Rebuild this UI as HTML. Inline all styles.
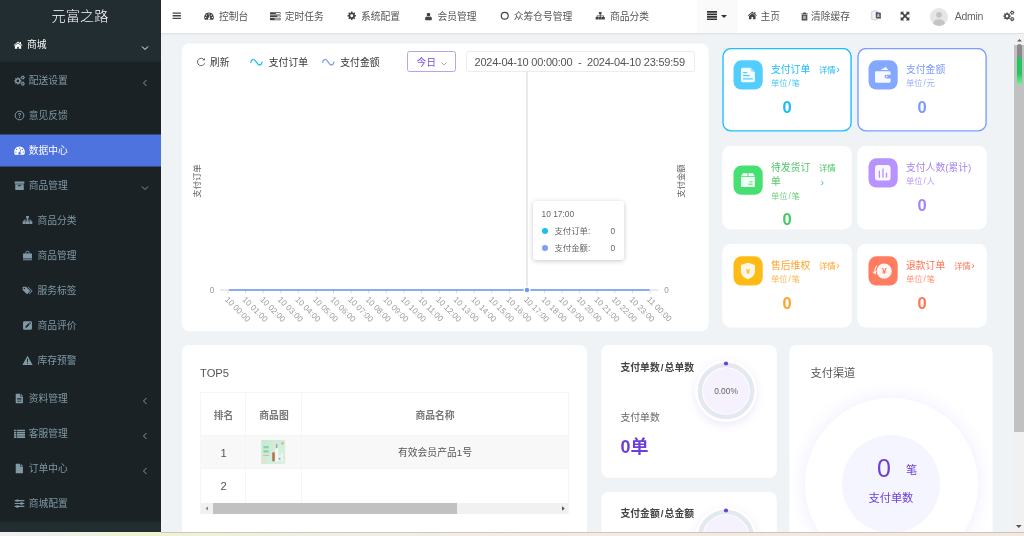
<!DOCTYPE html>
<html lang="zh-CN">
<head>
<meta charset="utf-8">
<title>元富之路</title>
<style>
*{box-sizing:border-box;margin:0;padding:0}
html,body{width:1024px;height:536px;overflow:hidden;background:#f0f3f6;font-family:"Liberation Sans","Noto Sans CJK SC",sans-serif;color:#444}
.abs{position:absolute}
#root{position:absolute;left:0;top:0;width:1024px;height:536px;overflow:hidden;will-change:transform;background:#f0f3f6}
#side{position:absolute;left:0;top:0;width:161px;height:532px;background:#1a2226;overflow:hidden}
#logo{position:absolute;left:0;top:0;width:161px;height:33px;text-indent:-1px;color:#fff;font-size:14.200px;line-height:32px;text-align:center;font-weight:300}
.mi{position:absolute;left:0;width:161px;height:35px;line-height:35.500px;font-size:9.750px;color:#7e98a4;white-space:nowrap}
.mi .t{position:absolute;left:28.700px;top:0}
.mi.sub .t{left:37.5px}
.mi svg.ic{position:absolute;left:14px;top:12px;width:11px;height:11px;fill:#8199a5;color:#8199a5}
.mi.sub svg.ic{left:22px}
.mi svg.ar{position:absolute;left:141px;top:16px;width:8px;height:8px;fill:none;stroke:#7e98a4;stroke-width:1}
.mi.top{color:#fff;height:29px;line-height:24px}
.mi.top .t{left:27px}
.mi.top svg.ic{left:12.500px;width:10px;height:10px}
.mi.top svg.ic{fill:#fff;top:7px}
.mi.top svg.ar{stroke:#fff;top:11px}
.mi.act{color:#fff;height:32px;line-height:33.500px}
.mi.act svg.ic{fill:#fff;top:11px}
#sidefoot{position:absolute;left:0;top:522px;width:161px;height:12px;background:#222d32}
#nav{position:absolute;left:161px;top:0;width:863px;height:33px;background:#fff;box-shadow:0 1px 2px rgba(0,0,0,.09)}
.ni{position:absolute;top:0;height:33px;line-height:33.500px;font-size:9.750px;color:#555;white-space:nowrap}
.ni svg{position:absolute;top:11px;fill:#444}
.card{position:absolute}
.xl{font-size:8.150px;fill:#9c9c9c;font-family:"Liberation Sans","Noto Sans CJK SC",sans-serif}
#vscroll{position:absolute;left:1013.500px;top:33.500px;width:11px;height:499px;background:#f1f1f1}
#thumb{position:absolute;left:0;top:11.500px;width:11px;height:386.500px;background:#c1c1c1}
#green{position:absolute;left:3px;top:10.500px;width:5.500px;height:41px;border-radius:3px;background:linear-gradient(#8a8a8a 0,#8a8a8a 31%,#22c55e 35%,#22c55e 72%,#7bef97 100%)}
#strip{position:absolute;left:0;top:531.700px;width:1024px;height:5px;background:linear-gradient(90deg,#eeeff1 0,#eef0e6 6%,#eef3cf 14%,#eff2d4 20%,#f0efe2 32%,#f3ede2 45%,#f5ebe1 60%,#f4e7dc 100%)}
#strip:before{content:"";position:absolute;left:161px;top:0;width:863px;height:1px;background:#cac7c0}
.yn{font-size:8.400px;fill:#666;font-family:"Liberation Sans","Noto Sans CJK SC",sans-serif}
.hd{position:absolute;font-size:9.800px;line-height:22px;white-space:nowrap}
.tt{font-size:8.400px;line-height:12px;color:#666;white-space:nowrap}
.sc{position:absolute;width:130px;height:84px;border:1px solid transparent}
.sc .ib{position:absolute;left:10px}
.sc .tl{position:absolute;left:48px;font-size:9.800px;line-height:14px;white-space:nowrap}
.sc .un{position:absolute;left:48px;font-size:8.400px;line-height:12px;white-space:nowrap;opacity:.8}
.sc .dt{position:absolute;left:96px;font-size:8.400px;line-height:14px;white-space:nowrap}
.sc .nm{position:absolute;left:0;width:128px;text-align:center;font-size:16.500px;font-weight:bold;line-height:20px}
.th{position:absolute;text-align:center;font-size:9.800px;line-height:20px;color:#787878;font-weight:bold;white-space:nowrap}
.td{position:absolute;text-align:center;font-size:9.800px;line-height:20px;color:#555;white-space:nowrap}
.td.n{font-size:11.200px}
.bt{font-size:9.800px;font-weight:bold;line-height:20px;color:#444;white-space:nowrap}
.ring{position:absolute;width:62px;height:62px;border-radius:50%;background:#fff;box-shadow:0 3px 10px rgba(130,100,220,.14)}
.ring svg{position:absolute;left:0;top:0}
.ring .in{position:absolute;left:0;top:0;width:62px;text-align:center;font-size:8.400px;line-height:63px;color:#666}

</style>
</head>
<body>
<div id="root">
<div id="side">
<svg class="abs" style="left:0;top:0" width="161" height="536" viewBox="0 0 161 536"><rect x="0" y="0" width="161" height="61.600" fill="#222d32"/><rect x="0" y="134.500" width="161" height="32" fill="#4e73df"/><rect x="0" y="521.700" width="161" height="11" fill="#222d32"/></svg>
<div id="logo">元富之路</div>
<div class="mi top" style="top:33px"><svg class="ic" viewBox="0 0 16 16"><path d="M8 2.2L1 8.2l.9 1L8 4l6.100 5.2.9-1L12.8 6.300V3h-1.600v1.900Z"/><path d="M8 5.100L3 9.300V14h3.800v-3.300h2.400V14H13V9.300Z"/></svg><span class="t">商城</span><svg class="ar" viewBox="0 0 8 8"><path d="M1 2.500L4 5.500L7 2.500"/></svg></div>
<div class="mi " style="top:62.5px"><svg class="ic" viewBox="0 0 16 16"><path fill-rule="evenodd" d="M10.72 7.71L10.72 9.49L9.49 9.53L9.01 10.69L9.85 11.59L8.59 12.85L7.69 12.01L6.53 12.49L6.49 13.72L4.71 13.72L4.67 12.49L3.51 12.01L2.61 12.85L1.35 11.59L2.19 10.69L1.71 9.53L0.48 9.49L0.48 7.71L1.71 7.67L2.19 6.51L1.35 5.61L2.61 4.35L3.51 5.19L4.67 4.71L4.71 3.48L6.49 3.48L6.53 4.71L7.69 5.19L8.59 4.35L9.85 5.61L9.01 6.51L9.49 7.67ZM3.70 8.60a1.9 1.9 0 1 0 3.8 0a1.9 1.9 0 1 0 -3.8 0Z"/><path fill-rule="evenodd" d="M15.82 2.89L15.82 4.31L14.99 4.31L14.51 5.14L14.92 5.86L13.70 6.57L13.28 5.85L12.32 5.85L11.90 6.57L10.68 5.86L11.09 5.14L10.61 4.31L9.78 4.31L9.78 2.89L10.61 2.89L11.09 2.06L10.68 1.34L11.90 0.63L12.32 1.35L13.28 1.35L13.70 0.63L14.92 1.34L14.51 2.06L14.99 2.89ZM11.70 3.60a1.1 1.1 0 1 0 2.2 0a1.1 1.1 0 1 0 -2.2 0Z"/><path fill-rule="evenodd" d="M15.82 11.89L15.82 13.31L14.99 13.31L14.51 14.14L14.92 14.86L13.70 15.57L13.28 14.85L12.32 14.85L11.90 15.57L10.68 14.86L11.09 14.14L10.61 13.31L9.78 13.31L9.78 11.89L10.61 11.89L11.09 11.06L10.68 10.34L11.90 9.63L12.32 10.35L13.28 10.35L13.70 9.63L14.92 10.34L14.51 11.06L14.99 11.89ZM11.70 12.60a1.1 1.1 0 1 0 2.2 0a1.1 1.1 0 1 0 -2.2 0Z"/></svg><span class="t">配送设置</span><svg class="ar" viewBox="0 0 8 8"><path d="M5.500 1L2.500 4L5.500 7"/></svg></div>
<div class="mi " style="top:97.5px"><svg class="ic" viewBox="0 0 16 16"><circle cx="8" cy="8" r="6.300" fill="none" stroke="currentColor" stroke-width="1.400"/><path d="M5.900 6.500c0-1.300 1-2.100 2.200-2.100s2.100.8 2.100 1.900c0 1.500-1.600 1.600-1.600 3H7.400c0-1.800 1.500-2 1.500-3 0-.5-.4-.8-.9-.8s-.9.400-.9 1ZM7.300 10.200h1.400v1.400H7.300Z"/></svg><span class="t">意见反馈</span></div>
<div class="mi act" style="top:134px"><svg class="ic" viewBox="0 0 16 16"><path fill-rule="evenodd" d="M8 2.300a7.800 7.800 0 0 0-6.700 11.700h13.400A7.800 7.800 0 0 0 8 2.300ZM8 3.600a1 1 0 1 1 0 2a1 1 0 0 1 0-2ZM3.900 5.400a1 1 0 1 1 0 2a1 1 0 0 1 0-2ZM12.100 5.400a1 1 0 1 1 0 2a1 1 0 0 1 0-2ZM2.700 9.300a1 1 0 1 1 0 2a1 1 0 0 1 0-2ZM13.300 9.300a1 1 0 1 1 0 2a1 1 0 0 1 0-2ZM9.300 6.200l.9.300-1.100 4.100a1.700 1.700 0 1 1-1-.3Z"/></svg><span class="t">数据中心</span></div>
<div class="mi " style="top:167.5px"><svg class="ic" viewBox="0 0 16 16"><path fill-rule="evenodd" d="M1 2h14v3.400H1ZM1.800 6.200h12.400V14.500H1.800ZM6 7.800a.7.700 0 0 0 0 1.400h4a.7.700 0 0 0 0-1.400Z"/></svg><span class="t">商品管理</span><svg class="ar" viewBox="0 0 8 8"><path d="M1 2.500L4 5.500L7 2.500"/></svg></div>
<div class="mi sub" style="top:202.5px"><svg class="ic" viewBox="0 0 16 16"><path d="M6 1.500h4v3.600H8.600v1.700h4.800v2.300H15v3.900h-4.400V9.100h1.600V8H8.600v1.100h1.600v3.900H5.800V9.100h1.600V8H3.800v1.100h1.600v3.900H1V9.100h1.600V6.800h4.800V5.100H6Z"/></svg><span class="t">商品分类</span></div>
<div class="mi sub" style="top:237.5px"><svg class="ic" viewBox="0 0 16 16"><path fill-rule="evenodd" d="M5 5V4a3 3 0 0 1 6 0v1h3.500v7.500h-13V5ZM6.200 5h3.600V4a1.800 1.800 0 0 0-3.600 0ZM1.500 13.300h13V15h-13Z"/></svg><span class="t">商品管理</span></div>
<div class="mi sub" style="top:272.5px"><svg class="ic" viewBox="0 0 16 16"><path fill-rule="evenodd" d="M1 2.500h4.700l6.300 6.300-4.700 4.700L1 7.200ZM3.500 3.900a1.100 1.100 0 1 0 0 2.200a1.100 1.100 0 0 0 0-2.200Z"/><path d="M7.600 2.500H9l6.300 6.300-4.700 4.700-.8-.8 3.900-3.900Z"/></svg><span class="t">服务标签</span></div>
<div class="mi sub" style="top:307.5px"><svg class="ic" viewBox="0 0 16 16"><path fill-rule="evenodd" d="M3.500 1.800h9a2 2 0 0 1 2 2v8.400a2 2 0 0 1-2 2h-9a2 2 0 0 1-2-2V3.800a2 2 0 0 1 2-2ZM10.300 4.200l1.600 1.600 1-1-1.600-1.600ZM9.600 4.900L5 9.500v1.600h1.600l4.600-4.600Z"/></svg><span class="t">商品评价</span></div>
<div class="mi sub" style="top:342.5px"><svg class="ic" viewBox="0 0 16 16"><path fill-rule="evenodd" d="M8 1.200L15.500 14.500H.5ZM7.200 5.500l.2 4.700h1.200l.2-4.700ZM7.200 11.200h1.600v1.600H7.200Z"/></svg><span class="t">库存预警</span></div>
<div class="mi " style="top:380.5px"><svg class="ic" viewBox="0 0 16 16"><path fill-rule="evenodd" d="M2.500 1h6.300v4.200h4.200V15H2.500ZM9.800 1l3.200 3.200H9.800ZM4.600 7.300v1h6.300v-1ZM4.600 9.400v1h6.300v-1ZM4.600 11.500v1h6.300v-1Z"/></svg><span class="t">资料管理</span><svg class="ar" viewBox="0 0 8 8"><path d="M5.500 1L2.500 4L5.500 7"/></svg></div>
<div class="mi " style="top:415.5px"><svg class="ic" viewBox="0 0 16 16"><path d="M0 2.500h3v2.400H0ZM4 2.500h12v2.400H4ZM0 5.700h3v2.400H0ZM4 5.700h12v2.400H4ZM0 8.900h3v2.400H0ZM4 8.900h12v2.400H4ZM0 12.100h3v2.400H0ZM4 12.100h12v2.400H4Z"/></svg><span class="t">客服管理</span><svg class="ar" viewBox="0 0 8 8"><path d="M5.500 1L2.500 4L5.500 7"/></svg></div>
<div class="mi " style="top:450.5px"><svg class="ic" viewBox="0 0 16 16"><path d="M2.500 1h6.300v4.200h4.200V15H2.500ZM9.800 1l3.200 3.200H9.800Z"/></svg><span class="t">订单中心</span><svg class="ar" viewBox="0 0 8 8"><path d="M5.500 1L2.500 4L5.500 7"/></svg></div>
<div class="mi " style="top:485.5px"><svg class="ic" viewBox="0 0 16 16"><path d="M1 3h2.500V2h3v1H15v1.600H6.500v1h-3v-1H1ZM1 7.200h8.500v-1h3v1H15v1.600h-2.500v1h-3v-1H1ZM1 11.400h2.500v-1h3v1H15V13H6.500v1h-3v-1H1Z"/></svg><span class="t">商城配置</span></div>
</div>
<div id="nav">
<div class="abs" style="left:535.7px;top:0;width:41px;height:33px;background:#fafafa"></div>
<svg class="abs" style="left:545.7px;top:10.700px;fill:#333" width="10" height="9.300" viewBox="0 0 11 10" preserveAspectRatio="none"><path d="M0 0h11v1.800H0ZM0 2.700h11v1.800H0ZM0 5.400h11v1.800H0ZM0 8.100h11v1.800H0Z"/></svg>
<svg class="abs" style="left:560.0px;top:14.5px;fill:#333" width="6" height="3" viewBox="0 0 6 3"><path d="M0 0h6L3 3Z"/></svg>
<div class="ni" style="left:0"><svg style="left:11.0px;top:11.4px;color:#444" width="9.5" height="9.5" viewBox="0 0 16 16"><path d="M1 2.600h14v2.200H1ZM1 6.900h14v2.200H1ZM1 11.200h14v2.200H1Z"/></svg></div>
<div class="ni" style="left:0"><svg style="left:43.0px;top:11.2px;color:#444" width="10" height="10" viewBox="0 0 16 16"><path fill-rule="evenodd" d="M8 2.300a7.800 7.800 0 0 0-6.700 11.700h13.400A7.800 7.800 0 0 0 8 2.300ZM8 3.600a1 1 0 1 1 0 2a1 1 0 0 1 0-2ZM3.900 5.400a1 1 0 1 1 0 2a1 1 0 0 1 0-2ZM12.100 5.400a1 1 0 1 1 0 2a1 1 0 0 1 0-2ZM2.700 9.300a1 1 0 1 1 0 2a1 1 0 0 1 0-2ZM13.300 9.300a1 1 0 1 1 0 2a1 1 0 0 1 0-2ZM9.300 6.200l.9.300-1.100 4.100a1.700 1.700 0 1 1-1-.3Z"/></svg><span class="abs" style="left:57.9px">控制台</span></div>
<div class="ni" style="left:0"><svg style="left:109.4px;top:10.9px;color:#444" width="10.5" height="10.5" viewBox="0 0 16 16"><path fill-rule="evenodd" d="M0 2h16v3.400H0ZM9 3v1.400h6V3ZM0 6.300h16v3.400H0ZM11 7.300v1.400h4V7.300ZM0 10.600h16V14H0ZM7 11.600V13h8v-1.400Z"/></svg><span class="abs" style="left:123.8px">定时任务</span></div>
<div class="ni" style="left:0"><svg style="left:186.2px;top:11.4px;color:#444" width="9.5" height="9.5" viewBox="0 0 16 16"><path fill-rule="evenodd" d="M15.09 6.76L15.09 9.24L13.45 9.31L12.77 10.93L13.89 12.14L12.14 13.89L10.93 12.77L9.31 13.45L9.24 15.09L6.76 15.09L6.69 13.45L5.07 12.77L3.86 13.89L2.11 12.14L3.23 10.93L2.55 9.31L0.91 9.24L0.91 6.76L2.55 6.69L3.23 5.07L2.11 3.86L3.86 2.11L5.07 3.23L6.69 2.55L6.76 0.91L9.24 0.91L9.31 2.55L10.93 3.23L12.14 2.11L13.89 3.86L12.77 5.07L13.45 6.69ZM5.50 8.00a2.5 2.5 0 1 0 5.0 0a2.5 2.5 0 1 0 -5.0 0Z"/></svg><span class="abs" style="left:200.0px">系统配置</span></div>
<div class="ni" style="left:0"><svg style="left:263.0px;top:11.7px;color:#444" width="9" height="9" viewBox="0 0 16 16"><path d="M8 1.500a3.300 3.300 0 0 1 0 6.600a3.300 3.300 0 0 1 0-6.600ZM4.500 8c1 .8 2.200 1.100 3.500 1.100S10.500 8.800 11.500 8c1.700.3 2.500 2.200 2.500 4.300 0 1.300-.8 2.200-2 2.200H4c-1.200 0-2-.9-2-2.200C2 10.200 2.800 8.300 4.500 8Z"/></svg><span class="abs" style="left:276.6px">会员管理</span></div>
<div class="ni" style="left:0"><svg style="left:338.5px;top:11.4px;color:#444" width="9.5" height="9.5" viewBox="0 0 16 16"><circle cx="8" cy="8" r="5.800" fill="none" stroke="currentColor" stroke-width="2"/></svg><span class="abs" style="left:352.7px">众筹仓号管理</span></div>
<div class="ni" style="left:0"><svg style="left:434.3px;top:10.9px;color:#444" width="10.5" height="10.5" viewBox="0 0 16 16"><path d="M6 1.500h4v3.600H8.600v1.700h4.800v2.300H15v3.900h-4.400V9.100h1.600V8H8.600v1.100h1.600v3.900H5.800V9.100h1.600V8H3.800v1.100h1.600v3.900H1V9.100h1.600V6.800h4.800V5.100H6Z"/></svg><span class="abs" style="left:448.9px">商品分类</span></div>
<div class="ni" style="left:0"><svg style="left:586.4px;top:10.3px;color:#444" width="10.5" height="10.5" viewBox="0 0 16 16"><path d="M8 2.2L1 8.2l.9 1L8 4l6.100 5.2.9-1L12.8 6.300V3h-1.600v1.900Z"/><path d="M8 5.100L3 9.300V14h3.800v-3.300h2.400V14H13V9.300Z"/></svg><span class="abs" style="left:599.5px">主页</span></div>
<div class="ni" style="left:0"><svg style="left:639.2px;top:11.7px;color:#444" width="9" height="9" viewBox="0 0 16 16"><path fill-rule="evenodd" d="M6 1h4l.8 1.500H14V4H2V2.500h3.200ZM3 5h10v9a1 1 0 0 1-1 1H4a1 1 0 0 1-1-1ZM5.200 6.500v6.500h1V6.500ZM7.500 6.500v6.500h1V6.500ZM9.800 6.500v6.500h1V6.500Z"/></svg><span class="abs" style="left:650.0px">清除缓存</span></div>
<div class="ni" style="left:0"><svg style="left:709.8px;top:10.3px;color:#444" width="10.5" height="10.5" viewBox="0 0 16 16"><path d="M1 2.500L7.500 1l3 1.800v11L7 15.500 1 14Z" fill="#f3f3f3" stroke="#b8b8b8" stroke-width=".9"/><path d="M7.300 3.200L15 4.300v8.900L7.300 12.500Z" fill="#4d5566"/><path d="M9.500 10.800l1.600-5 1.600 5M10 9.300h2.200" fill="none" stroke="#fff" stroke-width=".9"/></svg></div>
<div class="ni" style="left:0"><svg style="left:738.8px;top:10.6px;color:#444" width="10" height="10" viewBox="0 0 16 16"><path d="M1 1h5.800L4.900 2.900l3.100 3.100 3.100-3.100L9.200 1H15v5.800l-1.900-1.900L10 8l3.100 3.100 1.900-1.900V15H9.200l1.900-1.900L8 10l-3.100 3.100L6.800 15H1V9.200l1.900 1.900L6 8 2.900 4.900 1 6.800Z"/></svg></div>
<div class="ni" style="left:0"><svg style="left:842.0px;top:10.4px;color:#444" width="11.5" height="11.5" viewBox="0 0 16 16"><path fill-rule="evenodd" d="M10.72 7.71L10.72 9.49L9.49 9.53L9.01 10.69L9.85 11.59L8.59 12.85L7.69 12.01L6.53 12.49L6.49 13.72L4.71 13.72L4.67 12.49L3.51 12.01L2.61 12.85L1.35 11.59L2.19 10.69L1.71 9.53L0.48 9.49L0.48 7.71L1.71 7.67L2.19 6.51L1.35 5.61L2.61 4.35L3.51 5.19L4.67 4.71L4.71 3.48L6.49 3.48L6.53 4.71L7.69 5.19L8.59 4.35L9.85 5.61L9.01 6.51L9.49 7.67ZM3.70 8.60a1.9 1.9 0 1 0 3.8 0a1.9 1.9 0 1 0 -3.8 0Z"/><path fill-rule="evenodd" d="M15.82 2.89L15.82 4.31L14.99 4.31L14.51 5.14L14.92 5.86L13.70 6.57L13.28 5.85L12.32 5.85L11.90 6.57L10.68 5.86L11.09 5.14L10.61 4.31L9.78 4.31L9.78 2.89L10.61 2.89L11.09 2.06L10.68 1.34L11.90 0.63L12.32 1.35L13.28 1.35L13.70 0.63L14.92 1.34L14.51 2.06L14.99 2.89ZM11.70 3.60a1.1 1.1 0 1 0 2.2 0a1.1 1.1 0 1 0 -2.2 0Z"/><path fill-rule="evenodd" d="M15.82 11.89L15.82 13.31L14.99 13.31L14.51 14.14L14.92 14.86L13.70 15.57L13.28 14.85L12.32 14.85L11.90 15.57L10.68 14.86L11.09 14.14L10.61 13.31L9.78 13.31L9.78 11.89L10.61 11.89L11.09 11.06L10.68 10.34L11.90 9.63L12.32 10.35L13.28 10.35L13.70 9.63L14.92 10.34L14.51 11.06L14.99 11.89ZM11.70 12.60a1.1 1.1 0 1 0 2.2 0a1.1 1.1 0 1 0 -2.2 0Z"/></svg></div>
<svg class="abs" style="left:768.6px;top:7.7px" width="18" height="18" viewBox="0 0 18 18"><defs><clipPath id="avc"><circle cx="9" cy="9" r="9"/></clipPath></defs><circle cx="9" cy="9" r="9" fill="#e6e6e6"/><g clip-path="url(#avc)" fill="#c4c4c4"><circle cx="9" cy="6.800" r="2.900"/><ellipse cx="9" cy="15.200" rx="5.600" ry="4"/></g></svg>
<div class="ni" style="left:793.7px;font-size:10.500px;letter-spacing:-0.300px;color:#666">Admin</div>
</div>
<svg class="abs" style="left:0;top:0" width="1024" height="536" viewBox="0 0 1024 536"><rect x="181.800" y="43.600" width="526.700" height="287.600" rx="7.500" fill="#fff"/><rect x="181.900" y="345" width="405" height="200" rx="7.500" fill="#fff"/><rect x="601.200" y="344.900" width="175.600" height="132.800" rx="7.500" fill="#fff"/><rect x="601.200" y="491.900" width="175.600" height="132.800" rx="7.500" fill="#fff"/><rect x="789.300" y="344.900" width="203.200" height="200" rx="7.500" fill="#fff"/></svg>
<svg class="abs" style="left:0;top:0" width="1024" height="536" viewBox="0 0 1024 536">
  <!-- refresh icon -->
  <path d="M204.200 59.900A3.700 3.700 0 1 0 204.600 63.300" fill="none" stroke="#555" stroke-width="0.900"/>
  <path d="M202.600 60.300L204.900 60.300L204.900 58Z" fill="#555"/>
  <!-- legend icons -->
  <path d="M250.800 62.300C251.800 58.800 254 58.300 256.400 62.200C258.800 66.200 261.100 65.700 262.100 62.200" fill="none" stroke="#1bbef6" stroke-width="1.300" stroke-linecap="round"/>
  <path d="M322.600 62.300C323.600 58.800 325.800 58.300 328.200 62.200C330.600 66.200 332.900 65.700 333.900 62.200" fill="none" stroke="#7e9df7" stroke-width="1.300" stroke-linecap="round"/>
  <!-- axis pointer -->
  <line x1="527" y1="72" x2="527" y2="290" stroke="#d4d4d4" stroke-width="1"/>
  <!-- axis -->
  <line x1="220" y1="290" x2="658.500" y2="290" stroke="#ccc" stroke-width="0.800"/>
  <line x1="228.00" y1="290" x2="228.00" y2="293.5" stroke="#ccc" stroke-width="0.7"/>
<line x1="245.58" y1="290" x2="245.58" y2="293.5" stroke="#ccc" stroke-width="0.7"/>
<line x1="263.17" y1="290" x2="263.17" y2="293.5" stroke="#ccc" stroke-width="0.7"/>
<line x1="280.75" y1="290" x2="280.75" y2="293.5" stroke="#ccc" stroke-width="0.7"/>
<line x1="298.33" y1="290" x2="298.33" y2="293.5" stroke="#ccc" stroke-width="0.7"/>
<line x1="315.92" y1="290" x2="315.92" y2="293.5" stroke="#ccc" stroke-width="0.7"/>
<line x1="333.50" y1="290" x2="333.50" y2="293.5" stroke="#ccc" stroke-width="0.7"/>
<line x1="351.08" y1="290" x2="351.08" y2="293.5" stroke="#ccc" stroke-width="0.7"/>
<line x1="368.67" y1="290" x2="368.67" y2="293.5" stroke="#ccc" stroke-width="0.7"/>
<line x1="386.25" y1="290" x2="386.25" y2="293.5" stroke="#ccc" stroke-width="0.7"/>
<line x1="403.83" y1="290" x2="403.83" y2="293.5" stroke="#ccc" stroke-width="0.7"/>
<line x1="421.42" y1="290" x2="421.42" y2="293.5" stroke="#ccc" stroke-width="0.7"/>
<line x1="439.00" y1="290" x2="439.00" y2="293.5" stroke="#ccc" stroke-width="0.7"/>
<line x1="456.58" y1="290" x2="456.58" y2="293.5" stroke="#ccc" stroke-width="0.7"/>
<line x1="474.17" y1="290" x2="474.17" y2="293.5" stroke="#ccc" stroke-width="0.7"/>
<line x1="491.75" y1="290" x2="491.75" y2="293.5" stroke="#ccc" stroke-width="0.7"/>
<line x1="509.33" y1="290" x2="509.33" y2="293.5" stroke="#ccc" stroke-width="0.7"/>
<line x1="526.92" y1="290" x2="526.92" y2="293.5" stroke="#ccc" stroke-width="0.7"/>
<line x1="544.50" y1="290" x2="544.50" y2="293.5" stroke="#ccc" stroke-width="0.7"/>
<line x1="562.08" y1="290" x2="562.08" y2="293.5" stroke="#ccc" stroke-width="0.7"/>
<line x1="579.67" y1="290" x2="579.67" y2="293.5" stroke="#ccc" stroke-width="0.7"/>
<line x1="597.25" y1="290" x2="597.25" y2="293.5" stroke="#ccc" stroke-width="0.7"/>
<line x1="614.83" y1="290" x2="614.83" y2="293.5" stroke="#ccc" stroke-width="0.7"/>
<line x1="632.42" y1="290" x2="632.42" y2="293.5" stroke="#ccc" stroke-width="0.7"/>
<line x1="650.00" y1="290" x2="650.00" y2="293.5" stroke="#ccc" stroke-width="0.7"/>
  <line x1="229" y1="290" x2="649.500" y2="290" stroke="#6a96fa" stroke-width="1.450"/>
  <circle cx="527" cy="290" r="3.400" fill="#fff"/><circle cx="527" cy="290" r="2.200" fill="#6f95f9"/>
  <text x="212" y="293" text-anchor="middle" class="xl">0</text>
  <text x="666.500" y="293" text-anchor="middle" class="xl">0</text>
  <text transform="translate(200 181) rotate(-90)" text-anchor="middle" class="yn">支付订单</text>
  <text transform="translate(684 181) rotate(-90)" text-anchor="middle" class="yn">支付金额</text>
  <text x="0" y="0" transform="translate(224.50 300) rotate(45)" class="xl">10 00:00</text>
<text x="0" y="0" transform="translate(242.08 300) rotate(45)" class="xl">10 01:00</text>
<text x="0" y="0" transform="translate(259.67 300) rotate(45)" class="xl">10 02:00</text>
<text x="0" y="0" transform="translate(277.25 300) rotate(45)" class="xl">10 03:00</text>
<text x="0" y="0" transform="translate(294.83 300) rotate(45)" class="xl">10 04:00</text>
<text x="0" y="0" transform="translate(312.42 300) rotate(45)" class="xl">10 05:00</text>
<text x="0" y="0" transform="translate(330.00 300) rotate(45)" class="xl">10 06:00</text>
<text x="0" y="0" transform="translate(347.58 300) rotate(45)" class="xl">10 07:00</text>
<text x="0" y="0" transform="translate(365.17 300) rotate(45)" class="xl">10 08:00</text>
<text x="0" y="0" transform="translate(382.75 300) rotate(45)" class="xl">10 09:00</text>
<text x="0" y="0" transform="translate(400.33 300) rotate(45)" class="xl">10 10:00</text>
<text x="0" y="0" transform="translate(417.92 300) rotate(45)" class="xl">10 11:00</text>
<text x="0" y="0" transform="translate(435.50 300) rotate(45)" class="xl">10 12:00</text>
<text x="0" y="0" transform="translate(453.08 300) rotate(45)" class="xl">10 13:00</text>
<text x="0" y="0" transform="translate(470.67 300) rotate(45)" class="xl">10 14:00</text>
<text x="0" y="0" transform="translate(488.25 300) rotate(45)" class="xl">10 15:00</text>
<text x="0" y="0" transform="translate(505.83 300) rotate(45)" class="xl">10 16:00</text>
<text x="0" y="0" transform="translate(523.42 300) rotate(45)" class="xl">10 17:00</text>
<text x="0" y="0" transform="translate(541.00 300) rotate(45)" class="xl">10 18:00</text>
<text x="0" y="0" transform="translate(558.58 300) rotate(45)" class="xl">10 19:00</text>
<text x="0" y="0" transform="translate(576.17 300) rotate(45)" class="xl">10 20:00</text>
<text x="0" y="0" transform="translate(593.75 300) rotate(45)" class="xl">10 21:00</text>
<text x="0" y="0" transform="translate(611.33 300) rotate(45)" class="xl">10 22:00</text>
<text x="0" y="0" transform="translate(628.92 300) rotate(45)" class="xl">10 23:00</text>
<text x="0" y="0" transform="translate(646.50 300) rotate(45)" class="xl">11 00:00</text>
</svg>
<div class="hd" style="left:209.900px;top:52px;color:#444">刷新</div>
<div class="hd" style="left:268.800px;top:52px;color:#333">支付订单</div>
<div class="hd" style="left:340.300px;top:52px;color:#333">支付金额</div>
<div class="abs" style="left:407px;top:51px;width:49px;height:21px;border:1px solid #b7a3ee;border-radius:2.500px;background:#fff">
  <span class="abs" style="left:8.500px;top:0;line-height:22.500px;font-size:9.800px;color:#7a4fe0">今日</span>
  <svg class="abs" style="left:33px;top:9.500px" width="6" height="4" viewBox="0 0 6 4"><path d="M0.500 0.500L3 3L5.500 0.500" fill="none" stroke="#999" stroke-width="0.800"/></svg>
</div>
<div class="abs" style="left:465.500px;top:51px;width:229px;height:21px;border:1px solid #ececf0;border-radius:3px;background:#fff;font-size:11px;letter-spacing:-0.230px;line-height:20.500px;color:#555;padding-left:8px;white-space:pre">2024-04-10 00:00:00  -  2024-04-10 23:59:59</div>
<div class="abs" style="left:533px;top:201px;width:91px;height:59px;background:#fff;border-radius:3px;box-shadow:0 1px 5px rgba(0,0,0,.22)">
  <div class="abs tt" style="left:8.500px;top:7px">10 17:00</div>
  <div class="abs" style="left:8.500px;top:27px;width:6px;height:6px;border-radius:3px;background:#1bbef6"></div>
  <div class="abs tt" style="left:21.500px;top:24px">支付订单:</div>
  <div class="abs tt" style="left:77.500px;top:24px">0</div>
  <div class="abs" style="left:8.500px;top:43.500px;width:6px;height:6px;border-radius:3px;background:#7e9df7"></div>
  <div class="abs tt" style="left:21.500px;top:40.500px">支付金额:</div>
  <div class="abs tt" style="left:77.500px;top:40.500px">0</div>
</div>

<div class="sc b" style="left:722px;top:48px;color:#1cbcf5"><svg class="abs" style="left:-1px;top:-1px" width="132" height="86" viewBox="0 0 132 86"><rect x="1" y="0.600" width="128.100" height="82.300" rx="8" fill="#fff" stroke="#1bc0fc" stroke-width="1.400"/></svg><svg class="ib" style="top:11px" width="31" height="31" viewBox="0 0 31 31"><g transform="translate(0.5 0.3)"><rect width="29.200" height="29.200" rx="8" fill="#53cdfd"/><path d="M9.450 7.450h7.700l4.250 4.250v8.300a2 2 0 0 1-2 2h-9.950a2 2 0 0 1-2-2v-10.550a2 2 0 0 1 2-2Z" fill="#fff" fill-opacity=".93"/><path d="M17.150 7.450v2.800a1.450 1.450 0 0 0 1.450 1.450h2.800Z" fill="#53cdfd" fill-opacity=".45"/><path d="M10 12.300h3.300M10 15.300h5.700M10 18.600h8.900" stroke="#53cdfd" stroke-width="1.250" stroke-linecap="round" fill="none"/></g></svg><div class="tl" style="top:13.500px">支付订单</div><div class="un" style="top:27.500px">单位<span style="margin:0 0.750px">/</span>笔</div><div class="dt" style="top:13.500px">详情<span style="font-size:10.500px;line-height:0;margin-left:0.500px">›</span></div><div class="nm" style="top:47.500px">0</div></div>
<div class="sc b" style="left:857px;top:48px;color:#7a9bfb"><svg class="abs" style="left:-1px;top:-1px" width="132" height="86" viewBox="0 0 132 86"><rect x="1" y="0.600" width="128.100" height="82.300" rx="8" fill="#fff" stroke="#7b9dff" stroke-width="1.400"/></svg><svg class="ib" style="top:11px" width="31" height="31" viewBox="0 0 31 31"><g transform="translate(0.5 0.3)"><rect width="29.200" height="29.200" rx="8" fill="#84a8ff"/><path d="M7.700 11h13.200a1.200 1.200 0 0 1 1.200 1.200v2.300h-4.300a1.800 1.800 0 0 0 0 3.600h4.300v3.200a1.200 1.200 0 0 1-1.200 1.200h-13.200a1.200 1.200 0 0 1-1.200-1.200v-9.100a1.200 1.200 0 0 1 1.200-1.200Z" fill="#fff" fill-opacity=".93"/><path d="M12 9.600L16.800 6.900a.8.800 0 0 1 1 .2L19.700 9.600Z" fill="#fff" fill-opacity=".93"/><circle cx="18.200" cy="16.300" r=".8" fill="#fff" fill-opacity=".93"/></g></svg><div class="tl" style="top:13.500px">支付金额</div><div class="un" style="top:27.500px">单位<span style="margin:0 0.750px">/</span>元</div><div class="nm" style="top:47.500px">0</div></div>
<div class="sc" style="left:722px;top:146px;color:#4cc766"><svg class="abs" style="left:-1px;top:-1px" width="132" height="86" viewBox="0 0 132 86"><rect x="0.300" y="-0.150" width="129.500" height="83.700" rx="8.500" fill="#fff"/></svg><svg class="ib" style="top:18px" width="31" height="31" viewBox="0 0 31 31"><g transform="translate(0.5 0.6)"><rect width="29.200" height="29.200" rx="8" fill="#46e072"/><path d="M7.450 11.400h13.950v9.200a.7.700 0 0 1-.7.700h-12.550a.7.700 0 0 1-.7-.7Z" fill="#fff" fill-opacity=".93"/><path d="M9.300 7.600h4.650v3h-6.300ZM14.850 7.600h4.650l1.650 3h-6.300Z" fill="#fff" fill-opacity=".93"/><path d="M16 16.200h3M15 18.600h4" stroke="#46e072" stroke-width="1" fill="none"/></g></svg><div class="tl" style="top:13.500px">待发货订</div><div class="tl" style="top:28px">单</div><div class="un" style="top:42.500px">单位<span style="margin:0 0.750px">/</span>笔</div><div class="dt" style="top:13.500px">详情</div><div class="dt" style="top:27.500px;left:97.500px;font-size:10.500px">›</div><div class="nm" style="top:62px">0</div></div>
<div class="sc" style="left:857px;top:146px;color:#a684f5"><svg class="abs" style="left:-1px;top:-1px" width="132" height="86" viewBox="0 0 132 86"><rect x="0.300" y="-0.150" width="129.500" height="83.700" rx="8.500" fill="#fff"/></svg><svg class="ib" style="top:11px" width="31" height="31" viewBox="0 0 31 31"><g transform="translate(0.5 0.3)"><rect width="29.200" height="29.200" rx="8" fill="#b693ff"/><rect x="6.500" y="6.700" width="15.600" height="15.600" rx="3.200" fill="#fff" fill-opacity=".93"/><path d="M10.900 12.800v6.100M14.500 10.600v8.300M18 14.900v4" stroke="#b693ff" stroke-width="1.300" stroke-linecap="round" fill="none"/></g></svg><div class="tl" style="top:13.500px">支付人数(累计)</div><div class="un" style="top:27.500px">单位<span style="margin:0 0.750px">/</span>人</div><div class="nm" style="top:47.500px">0</div></div>
<div class="sc" style="left:722px;top:244px;color:#ffa32a"><svg class="abs" style="left:-1px;top:-1px" width="132" height="86" viewBox="0 0 132 86"><rect x="0.300" y="-0.150" width="129.500" height="83.700" rx="8.500" fill="#fff"/></svg><svg class="ib" style="top:11px" width="31" height="31" viewBox="0 0 31 31"><g transform="translate(0.5 0.3)"><rect width="29.200" height="29.200" rx="8" fill="#ffbb15"/><path d="M14.400 6.400L21.400 8.700v6.300c0 3.800-2.700 6.300-7 8-4.300-1.700-7-4.200-7-8V8.700Z" fill="#fff" fill-opacity=".9"/><text x="14.400" y="17.400" text-anchor="middle" font-size="8" font-weight="bold" fill="#ffbb15" font-family="Liberation Sans,sans-serif">¥</text></g></svg><div class="tl" style="top:13.500px">售后维权</div><div class="un" style="top:27.500px">单位<span style="margin:0 0.750px">/</span>笔</div><div class="dt" style="top:13.500px">详情<span style="font-size:10.500px;line-height:0;margin-left:0.500px">›</span></div><div class="nm" style="top:47.500px">0</div></div>
<div class="sc" style="left:857px;top:244px;color:#ff7655"><svg class="abs" style="left:-1px;top:-1px" width="132" height="86" viewBox="0 0 132 86"><rect x="0.300" y="-0.150" width="129.500" height="83.700" rx="8.500" fill="#fff"/></svg><svg class="ib" style="top:11px" width="31" height="31" viewBox="0 0 31 31"><g transform="translate(0.5 0.3)"><rect width="29.200" height="29.200" rx="8" fill="#ff7c61"/><circle cx="15.700" cy="14.750" r="7.600" fill="#fff" fill-opacity=".93"/><path d="M8.300 9.300c-1.500 2-2.200 4.300-2 6.800" fill="none" stroke="#fff" stroke-opacity=".85" stroke-width="1.100"/><path d="M3.900 15.600l3.300 2.800.6-3.600Z" fill="#fff" fill-opacity=".9"/><text x="15.700" y="18" text-anchor="middle" font-size="9" font-weight="bold" fill="#ff7c61" font-family="Liberation Sans,sans-serif">¥</text></g></svg><div class="tl" style="top:13.500px">退款订单</div><div class="un" style="top:27.500px">单位<span style="margin:0 0.750px">/</span>笔</div><div class="dt" style="top:13.500px">详情<span style="font-size:10.500px;line-height:0;margin-left:0.500px">›</span></div><div class="nm" style="top:47.500px">0</div></div>

<div class="abs" style="left:200px;top:363px;font-size:11.200px;line-height:20px;color:#555">TOP5</div>
<div class="abs" style="left:200px;top:392px;width:368.500px;height:122px;border:1px solid #f5f5f7;border-bottom:0;background:#fff;overflow:hidden">
  <div class="abs" style="left:0;top:42px;width:368px;height:33.500px;background:#f8f8f8;border-top:1px solid #f5f5f7;border-bottom:1px solid #f5f5f7"></div>
  <div class="abs" style="left:44px;top:0;width:1px;height:110px;background:#f5f5f7"></div>
  <div class="abs" style="left:100px;top:0;width:1px;height:110px;background:#f5f5f7"></div>
  <div class="th" style="left:0;width:45px;top:13px">排名</div>
  <div class="th" style="left:45px;width:56px;top:13px">商品图</div>
  <div class="th" style="left:101px;width:266px;top:13px">商品名称</div>
  <div class="td n" style="left:0;width:45px;top:50px">1</div>
  <div class="td" style="left:101px;width:266px;top:50px">有效会员产品1号</div>
  <div class="td n" style="left:0;width:45px;top:82.500px">2</div>
  <svg class="abs" style="left:60px;top:47px" width="25" height="25" viewBox="0 0 25 25"><g transform="translate(0.2 0)">
    <defs><linearGradient id="pg" x1="0" y1="0" x2="1" y2="1"><stop offset="0" stop-color="#c5ead4"/><stop offset="1" stop-color="#d9f2e3"/></linearGradient></defs>
    <rect width="24" height="24" fill="url(#pg)"/>
    <circle cx="21.300" cy="3.200" r="1.500" fill="#f4a57a" fill-opacity=".8"/>
    <circle cx="2.500" cy="21" r="2" fill="#f6d9b8" fill-opacity=".8"/>
    <circle cx="22.500" cy="17" r="1.500" fill="#f6d9b8" fill-opacity=".7"/>
    <path d="M10.500 2c2 2 2.500 6 1 10" stroke="#f3e3c8" stroke-width="1" fill="none"/>
    <rect x="2.200" y="6" width="5.300" height="2.300" fill="#8ccfae"/>
    <rect x="2.200" y="10.200" width="5.300" height="2.300" fill="#8ccfae"/>
    <rect x="1.800" y="14.800" width="6" height="1.200" fill="#f0b48a"/>
    <rect x="14.200" y="8" width="2.800" height="13.500" rx=".8" fill="#f4fbf7"/>
    <rect x="14.800" y="4" width="1.200" height="4.200" fill="#9a9aa0"/>
    <rect x="11" y="12.200" width="2.600" height="9.200" rx=".8" fill="#b8754d"/>
    <rect x="17.600" y="15" width="1.600" height="6.300" fill="#e8f1f5"/>
    <rect x="17.600" y="18" width="1.600" height="1.500" fill="#8d90d9"/>
    <rect x="19.800" y="13" width="1.800" height="8.400" rx=".6" fill="#edf8f2"/>
  </g></svg>
  <div class="abs" style="left:0;top:109.500px;width:368px;height:12px;background:#f1f1f1">
    <svg class="abs" style="left:4px;top:3.500px" width="3" height="5" viewBox="0 0 3 5"><path d="M3 0.500L0.500 2.500L3 4.500Z" fill="#888"/></svg>
    <div class="abs" style="left:12px;top:0;width:244px;height:12px;background:#c1c1c1"></div>
    <svg class="abs" style="left:361px;top:3.500px" width="3" height="5" viewBox="0 0 3 5"><path d="M0 0.300L2.800 2.500L0 4.700Z" fill="#555"/></svg>
  </div>
</div>
<!-- ratio card 1 -->

<div class="abs bt" style="left:620.500px;top:357.500px">支付单数<span style="margin:0 1.100px">/</span>总单数</div>
<div class="abs" style="left:620.500px;top:408px;font-size:9.800px;line-height:20px;color:#666">支付单数</div>
<div class="abs" style="left:620.500px;top:433.500px;font-size:18px;font-weight:bold;line-height:26px;color:#6d3fd6">0单</div>
<div class="ring" style="left:695px;top:360px"><svg width="62" height="62" viewBox="0 0 62 62"><circle cx="31" cy="31" r="26.100" fill="none" stroke="#e4e8f1" stroke-width="4.500"/><circle cx="31" cy="31" r="22.900" fill="#f5f1fd"/><circle cx="31" cy="3.500" r="2.100" fill="#6d3fd6"/></svg><div class="in">0.00%</div></div>
<!-- ratio card 2 -->

<div class="abs bt" style="left:620.500px;top:504px">支付金额<span style="margin:0 1.100px">/</span>总金额</div>
<div class="ring" style="left:695px;top:506.500px"><svg width="62" height="62" viewBox="0 0 62 62"><circle cx="31" cy="31" r="26.100" fill="none" stroke="#e4e8f1" stroke-width="4.500"/><circle cx="31" cy="31" r="22.900" fill="#f5f1fd"/><circle cx="31" cy="3.500" r="2.100" fill="#6d3fd6"/></svg><div class="in">0.00%</div></div>
<!-- channel card -->
<div class="card" style="left:789.500px;top:345px;width:203px;height:200px;overflow:hidden;border-radius:7.500px">
  <div class="abs" style="left:15px;top:52.500px;width:173px;height:173px;border-radius:50%;background:#fff;box-shadow:0 0 16px 3px rgba(120,125,255,.10)"></div>
  <div class="abs" style="left:52.500px;top:90px;width:98px;height:98px;border-radius:50%;background:#f4f5ff"></div>
  <div class="abs" style="left:21px;top:17.500px;font-size:11.200px;line-height:20px;color:#555">支付渠道</div>
  <div class="abs" style="left:87.500px;top:108px;font-size:25px;line-height:30px;color:#6d3fd6">0</div>
  <div class="abs" style="left:116.500px;top:115px;font-size:11.200px;line-height:20px;color:#6d3fd6">笔</div>
  <div class="abs" style="left:79px;top:143px;font-size:11.200px;line-height:20px;color:#6d3fd6;white-space:nowrap">支付单数</div>
</div>

<div id="vscroll">
  <svg class="abs" style="left:3px;top:5.500px" width="5" height="2.500" viewBox="0 0 5 2.500"><path d="M0 2.500L2.500 0L5 2.500Z" fill="#606060"/></svg>
  <div id="thumb"></div>
  <div id="green"></div>
  <svg class="abs" style="left:2.800px;top:491.600px" width="5.600" height="3" viewBox="0 0 5.600 3"><path d="M0 0L2.800 3L5.600 0Z" fill="#505050"/></svg>
</div>
<div id="strip"></div>
</div>
</body>
</html>
